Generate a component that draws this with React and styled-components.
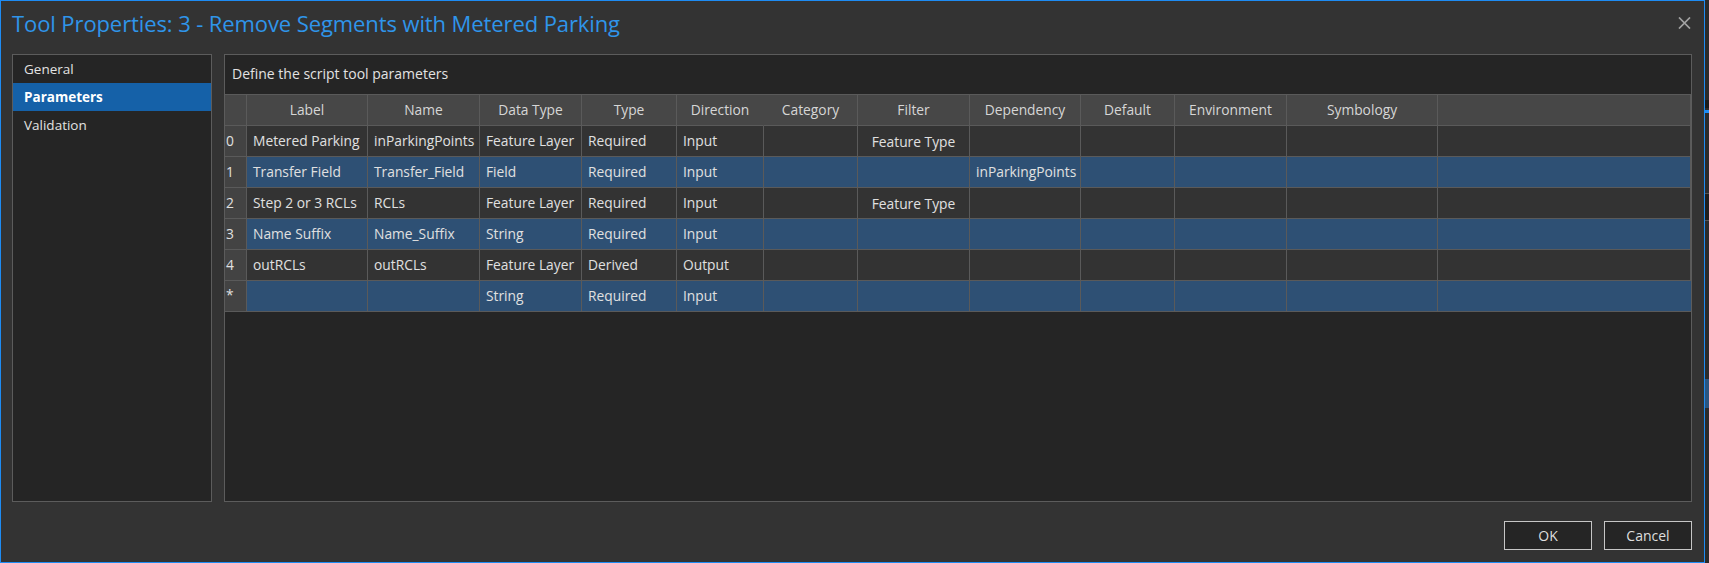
import React from "react";
import styled, { createGlobalStyle } from "styled-components";

const GlobalStyle = createGlobalStyle`
  html, body {
    margin: 0;
    padding: 0;
    background: #2b2b2b;
    overflow: hidden;
  }
  * {
    box-sizing: border-box;
  }
`

const FONT = `"Open Sans", "Noto Sans", "Liberation Sans", sans-serif`

const Screen = styled.div`
  display: flex;
  width: 1709px;
  height: 563px;
  font-family: ${FONT};
`

const Window = styled.div`
  width: 1705px;
  height: 563px;
  display: flex;
  flex-direction: column;
  background-color: #333333;
  border: 1px solid #1e8cf4;
`

const BackStrip = styled.div`
  flex: 1;
  display: flex;
  flex-direction: column;
  background-color: #2b2b2b;
  padding-top: 100px;
`

const StripBit = styled.div`
  height: ${p => p.h}px;
  margin-bottom: ${p => p.mb}px;
  background-color: ${p => p.color};
  border-top: ${p => (p.line ? "1px solid #555" : "none")};
  border-bottom: ${p => (p.line ? "1px solid #555" : "none")};
`

const TitleBar = styled.div`
  height: 53px;
  display: flex;
  align-items: center;
  justify-content: space-between;
  padding: 0 13px 10px 11px;
`

const Title = styled.h1`
  margin: 0;
  font-size: 22px;
  font-weight: 400;
  color: #2f95ea;
  letter-spacing: -0.1px;
`

const CloseButton = styled.div`
  width: 14px;
  height: 14px;
  display: flex;
  align-items: center;
  justify-content: center;
`

const Body = styled.div`
  flex: 1;
  display: flex;
  gap: 12px;
  padding: 0 12px 0 11px;
  min-height: 0;
`

const Nav = styled.div`
  width: 200px;
  display: flex;
  flex-direction: column;
  background-color: #252525;
  border: 1px solid #5c5c5c;
`

const NavItem = styled.div`
  height: 28px;
  display: flex;
  align-items: center;
  padding-left: 11px;
  font-size: 13.5px;
  color: ${p => (p.active ? "#ffffff" : "#e2e2e2")};
  font-weight: ${p => (p.active ? 700 : 400)};
  background-color: ${p => (p.active ? "#1561a8" : "transparent")};
`

const Panel = styled.div`
  flex: 1;
  display: flex;
  flex-direction: column;
  background-color: #252525;
  border: 1px solid #5c5c5c;
`

const Caption = styled.div`
  height: 40px;
  display: flex;
  align-items: center;
  padding-left: 7px;
  padding-bottom: 2px;
  font-size: 14px;
  color: #e2e2e2;
  border-bottom: 1px solid #5a5a5a;
`

const Grid = styled.div`
  display: grid;
  grid-template-columns: 22px 121px 112px 102px 95px 87px 94px 112px 111px 94px 112px 151px 1fr;
  grid-auto-rows: 31px;
`

const HeadCell = styled.div`
  display: flex;
  align-items: center;
  justify-content: center;
  background-color: #474747;
  border-bottom: 1px solid #5a5a5a;
  border-right: ${p => (p.noLine ? "1px solid #474747" : "1px solid #5a5a5a")};
  font-size: 13.8px;
  color: #d6d6d6;
  padding-bottom: 1px;
  &:last-child {
    border-right: none;
  }
`

const RowHead = styled.div`
  display: flex;
  align-items: center;
  padding-left: 1px;
  background-color: #434343;
  border-bottom: 1px solid #5a5a5a;
  border-right: 1px solid #5a5a5a;
  font-size: 13.8px;
  color: #e0e0e0;
  padding-bottom: ${p => (p.star ? "4px" : "1px")};
`

const Cell = styled.div`
  display: flex;
  align-items: center;
  justify-content: ${p => (p.center ? "center" : "flex-start")};
  padding-left: ${p => (p.center ? "0" : "6px")};
  padding-top: ${p => (p.center ? "2px" : "0")};
  padding-bottom: 1px;
  white-space: nowrap;
  overflow: hidden;
  background-color: ${p => (p.selected ? "#2e5074" : "#333333")};
  border-bottom: 1px solid #5a5a5a;
  border-right: 1px solid #5a5a5a;
  font-size: 13.8px;
  color: #e0e0e0;
  &:last-child {
    border-right: none;
  }
`

const Empty = styled.div`
  flex: 1;
`

const Footer = styled.div`
  height: 60px;
  display: flex;
  justify-content: flex-end;
  gap: 12px;
  padding: 19px 12px 0 0;
`

const Button = styled.button`
  width: 88px;
  height: 29px;
  background-color: #252525;
  border: 1px solid #c6c6c6;
  color: #dedede;
  font-family: ${FONT};
  font-size: 14px;
  padding: 0 0 1px;
  cursor: pointer;
`

const columns = [
  "Label", "Name", "Data Type", "Type", "Direction", "Category",
  "Filter", "Dependency", "Default", "Environment", "Symbology",
]

const rows = [
  { id: "0", cells: ["Metered Parking", "inParkingPoints", "Feature Layer", "Required", "Input", "", "Feature Type", ""] },
  { id: "1", selected: true, cells: ["Transfer Field", "Transfer_Field", "Field", "Required", "Input", "", "", "inParkingPoints"] },
  { id: "2", cells: ["Step 2 or 3 RCLs", "RCLs", "Feature Layer", "Required", "Input", "", "Feature Type", ""] },
  { id: "3", selected: true, cells: ["Name Suffix", "Name_Suffix", "String", "Required", "Input", "", "", ""] },
  { id: "4", cells: ["outRCLs", "outRCLs", "Feature Layer", "Derived", "Output", "", "", ""] },
  { id: "*", selected: true, cells: ["", "", "String", "Required", "Input", "", "", ""] },
]

function App() {
  return (
    <Screen>
      <GlobalStyle />
      <Window>
        <TitleBar>
          <Title>Tool Properties: 3 - Remove Segments with Metered Parking</Title>
          <CloseButton>
            <svg width="13" height="12" viewBox="0 0 13 12">
              <path d="M1 0.5 L12 11.5 M12 0.5 L1 11.5" stroke="#a3a3a3" strokeWidth="1.7" fill="none" />
            </svg>
          </CloseButton>
        </TitleBar>
        <Body>
          <Nav>
            <NavItem>General</NavItem>
            <NavItem active>Parameters</NavItem>
            <NavItem>Validation</NavItem>
          </Nav>
          <Panel>
            <Caption>Define the script tool parameters</Caption>
            <Grid>
              <HeadCell />
              {columns.map(c => (
                <HeadCell key={c} noLine={c === "Direction"}>{c}</HeadCell>
              ))}
              <HeadCell />
              {rows.map(r => (
                <React.Fragment key={r.id}>
                  <RowHead star={r.id === "*"}>{r.id}</RowHead>
                  {r.cells.map((v, i) => (
                    <Cell key={i} selected={r.selected} center={i === 6}>{v}</Cell>
                  ))}
                  <Cell selected={r.selected} />
                  <Cell selected={r.selected} />
                  <Cell selected={r.selected} />
                  <Cell selected={r.selected} />
                </React.Fragment>
              ))}
            </Grid>
            <Empty />
          </Panel>
        </Body>
        <Footer>
          <Button>OK</Button>
          <Button>Cancel</Button>
        </Footer>
      </Window>
      <BackStrip>
        <StripBit h={8} mb={2} color="#1b1b1b" />
        <StripBit h={3} mb={80} color="#1e8cf4" />
        <StripBit h={28} mb={158} color="#1e1e1e" line />
        <StripBit h={29} mb={0} color="#2a5580" />
      </BackStrip>
    </Screen>
  )
}

export default App
